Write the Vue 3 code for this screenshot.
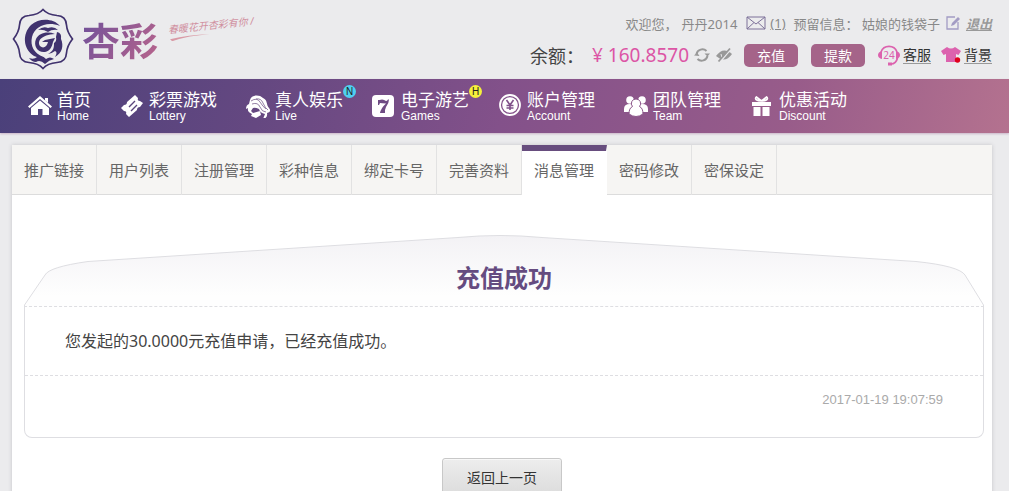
<template>
  <div class="page">
    <header class="header">
      <a href="#" class="brand">
        <svg class="brand-mark" viewBox="0 0 62 62" aria-hidden="true">
          <path
            d="M31 1.500C34 5 39 7 45 7.500Q54 8 54.500 17Q55 24 60.500 31Q55 38 54.500 45Q54 54 45 54.500C39 55 34 57 31 60.500C28 57 23 55 17 54.500Q8 54 7.500 45Q7 38 1.500 31Q7 24 7.500 17Q8 8 17 7.500C23 7 28 5 31 1.500Z"
            fill="none"
            stroke="#40326e"
            stroke-width="1.700"
          />
          <g fill="#40326e">
            <path d="M48 18C41 10 27 10 19 17C10 26 11 41 22 48Q26 50 31 49C22 45 18 38 20 29C23 18 35 13 48 18Z" />
            <path d="M26 22Q31 18 36 20Q42 18 46 22Q40 21 36 24Q31 21 26 22Z" />
            <path d="M43 26C35 23 27 25 24 31C21 38 26 45 33 44C38 43 40 39 41 34L43 30L33 32L30 34L36 34C35 39 31 41 28 38C25 33 29 27 43 26Z" />
            <path d="M45 24Q50 25 49 31C52 38 50 45 43 49Q46 44 43 43Q39 46 36 46C42 43 42 39 42 35Q45 33 44 29Z" />
            <path d="M17 50Q22 52 25 49Q31 47 34 51Q38 48 42 51Q37 52 33 56Q28 51 24 54Q20 54 17 50Z" />
          </g>
        </svg>
        <span class="brand-name">杏彩</span>
        <span class="slogan">春暖花开杏彩有你 /
          <svg viewBox="0 0 42 5" aria-hidden="true">
            <path d="M1 3Q20 0 41 2Q20 1 3 5Z" fill="#d99aa6" />
          </svg>
        </span>
      </a>

      <div class="account">
        <div class="account-row welcome">
          <span class="user">欢迎您，</span>
          <span>丹丹2014</span>
          <a href="#" class="mail">
            <svg viewBox="0 0 20 14" aria-label="站内信">
              <path
                d="M1 1H19V13H1ZM1 1L10 8L19 1M1 13L8 6.500M19 13L12 6.500"
                fill="none"
                stroke="#7d7199"
              />
            </svg>
            <span>(1)</span>
          </a>
          <span class="reserved">预留信息： 姑娘的钱袋子</span>
          <button type="button" class="icon-btn" aria-label="编辑">
            <svg viewBox="0 0 14 14">
              <path d="M9 1H1V13H12V6" fill="none" stroke="#a39cc4" stroke-width="1.300" />
              <path d="M5 10L6 7L12 1L14 3L8 9Z" fill="#a39cc4" />
            </svg>
          </button>
          <a href="#" class="logout">退出</a>
        </div>

        <div class="account-row funds">
          <span class="label">余额：</span>
          <span class="amount"><span>¥</span>160.8570</span>
          <button type="button" class="icon-btn refresh" aria-label="刷新">
            <svg viewBox="0 0 16 16">
              <path
                d="M2.500 7A6 6 0 0 1 12.500 4M13.500 9A6 6 0 0 1 3.500 12"
                fill="none"
                stroke="#999"
                stroke-width="2"
              />
              <path d="M10.500 6.500H16L13.500 9.500ZM0 8.500L3 5.500L5.500 9Z" fill="#999" />
            </svg>
          </button>
          <button type="button" class="icon-btn hide" aria-label="隐藏余额">
            <svg viewBox="0 0 16 16">
              <path d="M0 9Q7-1 16 7Q9 17 0 9Z" fill="#999" />
              <path d="M5 7Q5 11 8 11" fill="none" stroke="#ebebed" />
              <path d="M4 15L15 2" stroke="#ebebed" stroke-width="1.500" />
              <path d="M2.500 14.500L14 1.500" stroke="#999" stroke-width="1.800" />
            </svg>
          </button>
          <button type="button" class="pill">充值</button>
          <button type="button" class="pill">提款</button>
          <a href="#" class="tool service">
            <svg viewBox="0 0 22 22" aria-hidden="true">
              <path
                d="M3 8A8.500 8.500 0 0 1 19 8M19.500 14Q18 20 13 20"
                fill="none"
                stroke="#dc62ae"
                stroke-width="1.700"
              />
              <path
                d="M4 7V15Q0 14 0 11T4 7ZM18 7V15Q22 14 22 11T18 7ZM10 18.500H14V21.500H10Z"
                fill="#dc62ae"
              />
              <text x="11" y="15" text-anchor="middle">24</text>
            </svg>
            <span>客服</span>
          </a>
          <a href="#" class="tool">
            <svg viewBox="0 0 20 18" aria-hidden="true">
              <path d="M6 1Q10 4 14 1L20 5L17.500 9L15 8V16H5V8L2.500 9L0 5Z" fill="#dc62ae" />
              <circle cx="16.500" cy="14" r="2.700" fill="#e0001b" />
            </svg>
            <span>背景</span>
          </a>
        </div>
      </div>
    </header>

    <nav class="nav">
      <a v-for="item in navItems" :key="item.en" href="#" class="nav-item">
        <svg class="nav-icon" viewBox="0 0 24 24" aria-hidden="true">
          <g v-if="item.icon === 'home'">
            <path d="M12 2L24 12.500L22.500 14L12 5L1.500 14L0 12.500Z" />
            <path d="M17 4H20V9L17 6.500ZM12 6.500L21 14V21H14.500V15H10V21H3V14Z" />
          </g>
          <g v-else-if="item.icon === 'ticket'">
            <path
              d="M15 1L18 4Q17 7 20 7L23 9L20 13Q17 13 17 16L9 23L6 20Q7 17 4 17L1 14L4 11Q7 11 7 8Z"
            />
            <path d="M9 13L15 7M11 17L17 11" stroke="#5b467c" stroke-width="1.400" />
          </g>
          <g v-else-if="item.icon === 'live'">
            <path
              d="M4 6C5 1 13 0 17 4C22 6 20 11 23 14Q26 18 21 19Q22 24 17 25L19 20Q14 19 13 15Q9 13 7 14L5 17L7 19L14 17L15 21L10 24L5 22L6 20Q1 18 2 14L0 15Q0 11 3 10Z"
            />
            <path
              d="M5 7Q11 3 14 8T20 15M10 5Q15 4 17 9T22 16M6 10Q12 8 14 13T20 18"
              fill="none"
              stroke="#674a80"
              stroke-width="0.700"
            />
          </g>
          <g v-else-if="item.icon === 'seven'">
            <rect x="0" y="1" width="22" height="22" rx="4" />
            <path
              d="M6 6H7.500Q11 4.500 14 7Q15 7 16 5.500H17Q17 9 14 13Q12.500 16 13 19H8Q9 14 14 9.500Q10 9 8 9L7 11H6Z"
              fill="#6e4b83"
            />
          </g>
          <g v-else-if="item.icon === 'coin'">
            <circle cx="12" cy="11" r="10" fill="none" stroke="#fff" stroke-width="1.800" />
            <circle cx="12" cy="11" r="7.800" />
            <path
              d="M8.500 6L12 11L15.500 6M12 11V16M8.500 11.500H15.500M8.500 14H15.500"
              fill="none"
              stroke="#80518a"
              stroke-width="1.600"
            />
          </g>
          <g v-else-if="item.icon === 'team'">
            <circle cx="6" cy="6" r="3.800" />
            <circle cx="18" cy="6" r="3.800" />
            <path d="M0 18V15Q0 10 6 10Q9 10 9 12V18ZM24 18V15Q24 10 18 10Q15 10 15 12V18Z" />
            <path
              d="M12 5A4.500 4.500 0 0 1 15.500 12.500Q19 14 19 20Q12 25 5 20Q5 14 8.500 12.500A4.500 4.500 0 0 1 12 5Z"
              stroke="#8b5589"
            />
          </g>
          <g v-else>
            <path d="M2 8H21V12H2ZM3.500 13H10.500V22H3.500ZM12.500 13H19.500V22H12.500Z" />
            <path
              d="M11.500 7C7 7 4 5 6.500 3T11.500 7C16 7 19 5 16.500 3T11.500 7"
              fill="none"
              stroke="#fff"
              stroke-width="1.700"
            />
            <path d="M11.500 13V22" stroke="#985c8b" />
          </g>
        </svg>
        <span class="nav-text">
          <span class="nav-cn">{{ item.cn }}</span>
          <span class="nav-en">{{ item.en }}</span>
          <i v-if="item.badge" class="badge" :class="item.badge === 'N' ? 'new' : 'hot'">{{ item.badge }}</i>
        </span>
      </a>
    </nav>

    <main class="panel">
      <div class="tabs">
        <a
          v-for="tab in tabs"
          :key="tab"
          href="#"
          class="tab"
          :class="{ active: tab === activeTab }"
          @click.prevent="activeTab = tab"
        >{{ tab }}</a>
      </div>

      <article class="message">
        <div class="message-head">
          <svg class="message-cap" viewBox="0 0 960 72" preserveAspectRatio="none" aria-hidden="true">
            <defs>
              <linearGradient id="cap" x1="0" y1="0" x2="0" y2="1">
                <stop offset="0" stop-color="#f3f2f5" />
                <stop offset="0.850" stop-color="#fefefe" />
              </linearGradient>
            </defs>
            <path
              d="M0.500 72L0.500 70L21 40Q25 32 64 26.500L434 2.500Q476-1.500 518 2.500L892 26.500Q935 31 941 40L959.500 70V72"
              fill="url(#cap)"
              stroke="#dedee2"
            />
          </svg>
          <h1>充值成功</h1>
        </div>
        <div class="message-body">
          <p class="message-text">您发起的<span>30.0000</span>元充值申请，已经充值成功。</p>
          <time class="message-time">2017-01-19 19:07:59</time>
        </div>
      </article>

      <button type="button" class="back">返回上一页</button>
    </main>
  </div>
</template>

<script setup>
import { ref } from 'vue';

const navItems = [
  { cn: '首页', en: 'Home', icon: 'home' },
  { cn: '彩票游戏', en: 'Lottery', icon: 'ticket' },
  { cn: '真人娱乐', en: 'Live', icon: 'live', badge: 'N' },
  { cn: '电子游艺', en: 'Games', icon: 'seven', badge: 'H' },
  { cn: '账户管理', en: 'Account', icon: 'coin' },
  { cn: '团队管理', en: 'Team', icon: 'team' },
  { cn: '优惠活动', en: 'Discount', icon: 'gift' },
];

const tabs = [
  '推广链接',
  '用户列表',
  '注册管理',
  '彩种信息',
  '绑定卡号',
  '完善资料',
  '消息管理',
  '密码修改',
  '密保设定',
];

const activeTab = ref('消息管理');
</script>

<style>
body {
  margin: 0;
  background: #ebebed;
}
</style>

<style scoped>
.page {
  font-family: "Noto Sans", "Noto Sans CJK SC", sans-serif;
  font-size: 13px;
  color: #444;
}

a {
  color: inherit;
  text-decoration: none;
}

button {
  font-family: inherit;
  cursor: pointer;
}

svg {
  display: block;
  flex: none;
}

.header {
  display: flex;
  justify-content: space-between;
  padding: 8px 17px 0 12px;
  height: 71px;
}

.brand {
  display: flex;
  align-items: flex-start;
}

.brand-mark {
  width: 62px;
  height: 62px;
}

.brand-name {
  margin: 10px 0 0 8px;
  font-size: 38px;
  line-height: 44px;
  font-weight: bold;
  background: linear-gradient(120deg, #70509a, #b8648c);
  -webkit-background-clip: text;
  background-clip: text;
  color: transparent;
}

.slogan {
  margin: 10px 0 0 10px;
  font-size: 10px;
  line-height: 14px;
  font-style: italic;
  color: #d08e9e;
  transform: rotate(-6deg);
}

.slogan svg {
  width: 42px;
  height: 5px;
}

.account {
  display: flex;
  flex-direction: column;
  align-items: flex-end;
}

.account-row {
  display: flex;
  align-items: center;
}

.welcome {
  height: 30px;
  color: #888;
}

.user {
  margin-right: 4px;
}

.mail {
  display: flex;
  align-items: center;
  gap: 4px;
  margin: 0 8px 0 9px;
}

.mail svg {
  width: 20px;
  height: 14px;
}

.mail span {
  text-decoration: underline;
}

.icon-btn {
  padding: 0;
  border: 0;
  background: none;
}

.welcome .icon-btn {
  margin: 0 6px;
}

.welcome .icon-btn svg {
  width: 14px;
  height: 14px;
}

.logout {
  font-weight: bold;
  font-style: italic;
  color: #999;
  text-decoration: underline;
}

.funds {
  height: 34px;
}

.label {
  font-size: 18px;
}

.amount {
  margin: 0 5px 0 8px;
  font-size: 19px;
  color: #dc55a5;
}

.amount span {
  margin-right: 5px;
}

.funds .icon-btn svg {
  width: 16px;
  height: 16px;
}

.hide {
  margin: 0 12px 0 6px;
}

.pill {
  width: 54px;
  height: 23px;
  margin-right: 13px;
  padding: 0;
  border: 0;
  border-radius: 5px;
  background: #a56489;
  font-size: 14px;
  line-height: 23px;
  color: #fff;
}

.tool {
  display: flex;
  align-items: center;
  gap: 3px;
  font-size: 14px;
  line-height: 17px;
  color: #333;
}

.tool span {
  border-bottom: 1px solid #999;
}

.tool svg {
  width: 20px;
  height: 18px;
}

.service {
  margin-right: 10px;
}

.service svg {
  width: 22px;
  height: 22px;
}

.service text {
  font-size: 10px;
  fill: #dc62ae;
}

.nav {
  display: flex;
  gap: 29px;
  height: 54px;
  padding-left: 28px;
  background: linear-gradient(105deg, #4a407a 0%, #654881 26%, #83518a 50%, #985c8a 78%, #b4728f 100%);
  box-shadow: 0 1px 2px #c9b3c8;
  color: #fff;
}

.nav-item {
  display: flex;
  gap: 5px;
}

.nav-icon {
  width: 24px;
  height: 24px;
  margin-top: 15px;
  fill: #fff;
}

.nav-text {
  position: relative;
  display: flex;
  flex-direction: column;
  padding-top: 10px;
}

.nav-cn {
  font-size: 17px;
  line-height: 21px;
}

.nav-en {
  font-family: "Liberation Sans", Arial, sans-serif;
  font-size: 12px;
  line-height: 13px;
}

.badge {
  position: absolute;
  top: 6px;
  right: -13px;
  width: 13px;
  height: 13px;
  border-radius: 50%;
  font-family: "Liberation Sans", Arial, sans-serif;
  font-size: 10px;
  line-height: 13px;
  font-style: normal;
  text-align: center;
  color: #222;
}

.new {
  background: #4fd0f0;
}

.hot {
  background: #f5f03c;
}

.panel {
  margin: 12px 17px 0 12px;
  padding-bottom: 24px;
  background: #fff;
  box-shadow: 0 0 4px #c4c4c8;
}

.tabs {
  display: flex;
  background: #f6f5f3;
  box-shadow: inset 0 -1px #dcdcdc;
}

.tab {
  box-sizing: border-box;
  width: 85px;
  height: 50px;
  border-right: 1px solid #e2e2e2;
  font-size: 15px;
  line-height: 50px;
  text-align: center;
  color: #666;
}

.tab.active {
  border-top: 6px solid #674d7e;
  border-right-color: #fff;
  background: #fff;
  line-height: 38px;
}

.message {
  margin: 40px 8px 0 12px;
}

.message-head {
  position: relative;
  height: 72px;
}

.message-cap {
  position: absolute;
  inset: 0;
  width: 100%;
  height: 100%;
}

.message h1 {
  position: relative;
  margin: 0;
  padding-top: 25px;
  font-size: 24px;
  line-height: 36px;
  text-align: center;
  color: #654b80;
}

.message-body {
  position: relative;
  border: 1px solid #dedee2;
  border-top: 1px dashed #dedee2;
  border-radius: 0 0 8px 8px;
  margin-top: -1px;
}

.message-text {
  margin: 0;
  padding: 0 40px;
  border-bottom: 1px dashed #dedee2;
  font-size: 16px;
  line-height: 68px;
}

.message-time {
  display: block;
  padding: 16px 40px 30px;
  font-family: "Liberation Sans", Arial, sans-serif;
  font-size: 13px;
  line-height: 15px;
  text-align: right;
  color: #aaa;
}

.back {
  display: block;
  width: 120px;
  height: 38px;
  margin: 20px auto 0;
  border: 1px solid #c8c8c8;
  border-radius: 3px;
  background: linear-gradient(#ededed, #dcdcdc);
  box-shadow: inset 0 1px #f8f8f8;
  font-size: 14px;
  color: #333;
}
</style>
